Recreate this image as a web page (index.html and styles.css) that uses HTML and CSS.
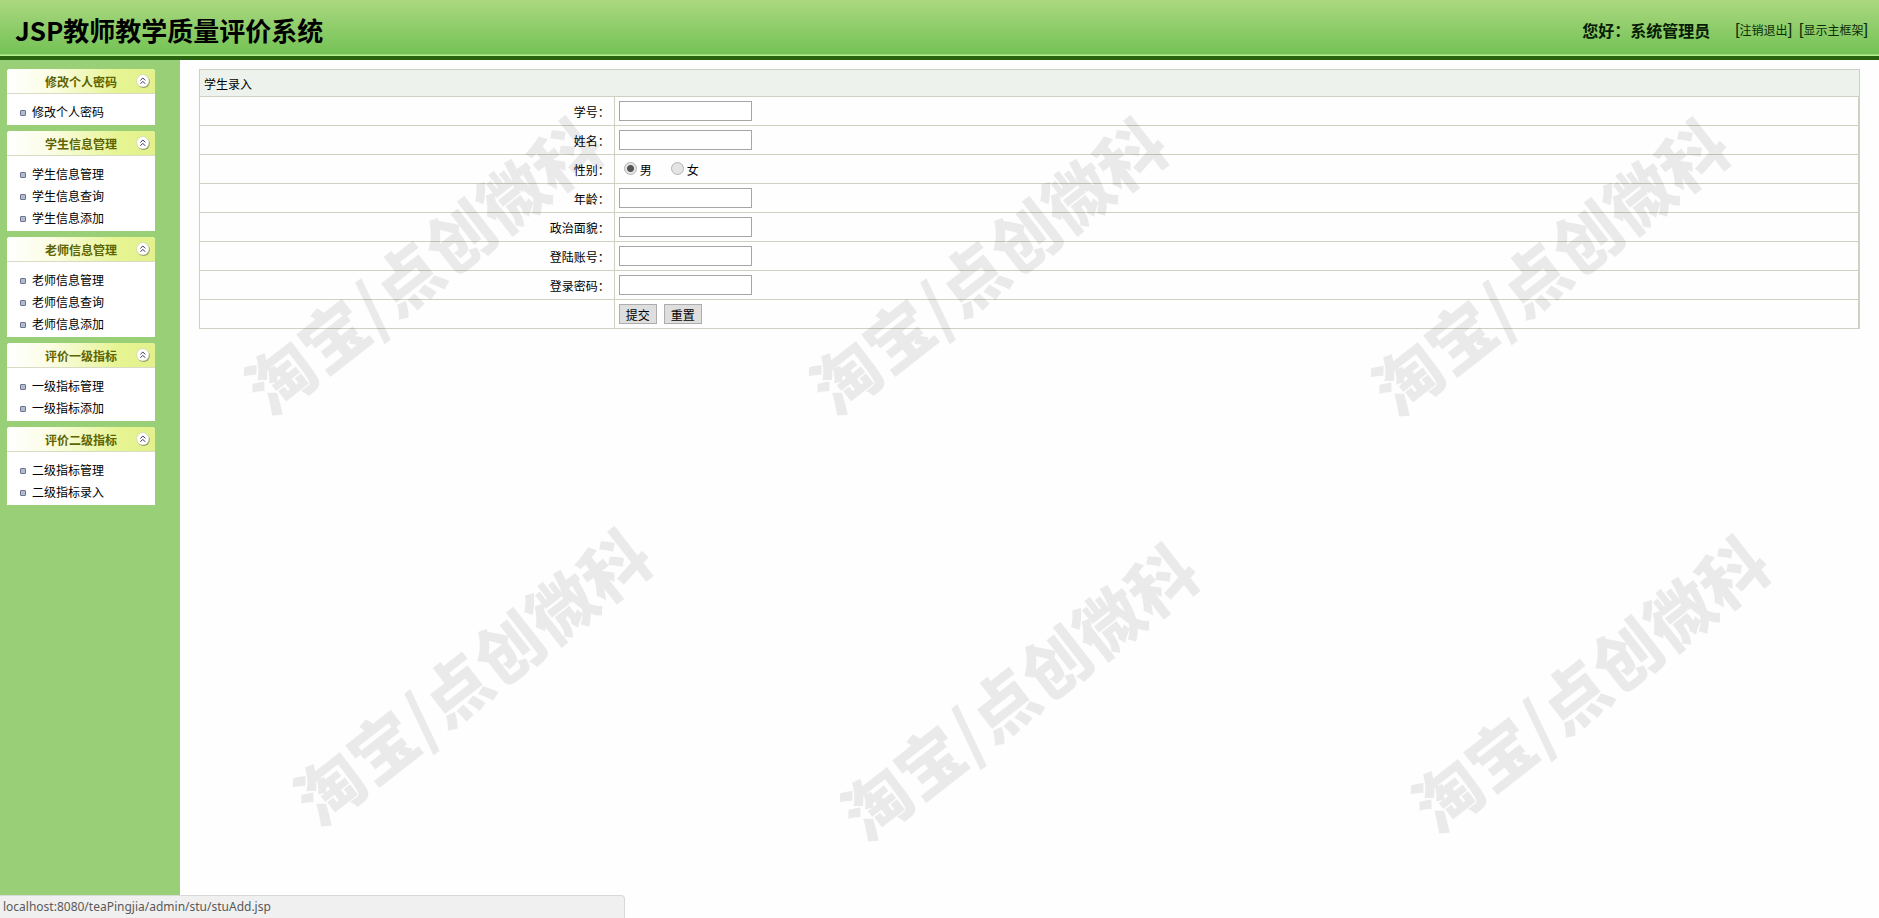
FILE: index.html
```html
<!DOCTYPE html>
<html lang="zh-CN">
<head>
<meta charset="UTF-8">
<title>JSP教师教学质量评价系统</title>
<link rel="stylesheet" href="styles.css">
</head>
<body>
  <svg class="sprite" width="0" height="0">
    <symbol id="arrow" viewBox="0 0 14 14">
      <circle cx="7.6" cy="7.8" r="6.2" fill="#8f9a6a"/>
      <circle cx="6.8" cy="6.8" r="6.2" fill="#fff" stroke="#c9cfa8" stroke-width="0.6"/>
      <path d="M4.4 6.4 L6.8 4 L9.2 6.4 M4.4 9.8 L6.8 7.4 L9.2 9.8" fill="none" stroke="#33334d" stroke-width="1"/>
    </symbol>
  </svg>

  <div class="header">
    <h1>JSP教师教学质量评价系统</h1>
    <div class="user">
      <span class="hello">您好：系统管理员</span>
      <span>[<a href="#">注销退出</a>]</span>
      <span>[<a href="#">显示主框架</a>]</span>
    </div>
  </div>

  <div class="main">
    <!-- menu -->
    <div class="sidebar">
      <div class="menu">
        <div class="menu-title"><h2>修改个人密码</h2><button type="button"><svg><use href="#arrow"/></svg></button></div>
        <ul>
          <li><a href="#">修改个人密码</a></li>
        </ul>
      </div>
      <div class="menu">
        <div class="menu-title"><h2>学生信息管理</h2><button type="button"><svg><use href="#arrow"/></svg></button></div>
        <ul>
          <li><a href="#">学生信息管理</a></li>
          <li><a href="#">学生信息查询</a></li>
          <li><a href="#">学生信息添加</a></li>
        </ul>
      </div>
      <div class="menu">
        <div class="menu-title"><h2>老师信息管理</h2><button type="button"><svg><use href="#arrow"/></svg></button></div>
        <ul>
          <li><a href="#">老师信息管理</a></li>
          <li><a href="#">老师信息查询</a></li>
          <li><a href="#">老师信息添加</a></li>
        </ul>
      </div>
      <div class="menu">
        <div class="menu-title"><h2>评价一级指标</h2><button type="button"><svg><use href="#arrow"/></svg></button></div>
        <ul>
          <li><a href="#">一级指标管理</a></li>
          <li><a href="#">一级指标添加</a></li>
        </ul>
      </div>
      <div class="menu">
        <div class="menu-title"><h2>评价二级指标</h2><button type="button"><svg><use href="#arrow"/></svg></button></div>
        <ul>
          <li><a href="#">二级指标管理</a></li>
          <li><a href="#">二级指标录入</a></li>
        </ul>
      </div>
    </div>

    <!-- student form -->
    <form class="content">
      <table>
        <tr class="caption">
          <td colspan="2">学生录入</td>
        </tr>
        <tr>
          <td class="label"><label for="xuehao">学号：</label></td>
          <td class="field"><input type="text" id="xuehao"></td>
        </tr>
        <tr>
          <td class="label"><label for="name">姓名：</label></td>
          <td class="field"><input type="text" id="name"></td>
        </tr>
        <tr>
          <td class="label">性别：</td>
          <td class="field">
            <div class="radios">
              <label><input type="radio" name="sex" checked>男</label>
              <label><input type="radio" name="sex">女</label>
            </div>
          </td>
        </tr>
        <tr>
          <td class="label"><label for="age">年龄：</label></td>
          <td class="field"><input type="text" id="age"></td>
        </tr>
        <tr>
          <td class="label"><label for="zzmm">政治面貌：</label></td>
          <td class="field"><input type="text" id="zzmm"></td>
        </tr>
        <tr>
          <td class="label"><label for="loginname">登陆账号：</label></td>
          <td class="field"><input type="text" id="loginname"></td>
        </tr>
        <tr>
          <td class="label"><label for="loginpw">登录密码：</label></td>
          <td class="field"><input type="password" id="loginpw"></td>
        </tr>
        <tr>
          <td class="label"></td>
          <td class="field">
            <div class="buttons">
              <button type="submit">提交</button>
              <button type="reset">重置</button>
            </div>
          </td>
        </tr>
      </table>
    </form>
  </div>

  <div class="watermarks">
    <span class="mark m1">淘宝/点创微科</span>
    <span class="mark m2">淘宝/点创微科</span>
    <span class="mark m3">淘宝/点创微科</span>
    <span class="mark m4">淘宝/点创微科</span>
    <span class="mark m5">淘宝/点创微科</span>
    <span class="mark m6">淘宝/点创微科</span>
  </div>

  <div class="status">localhost:8080/teaPingjia/admin/stu/stuAdd.jsp</div>
</body>
</html>
```

FILE: styles.css
```css
* {
  box-sizing: border-box;
}

body {
  margin: 0;
  min-height: 100vh;
  display: flex;
  flex-direction: column;
  font-family: "Liberation Sans", "Noto Sans CJK SC", sans-serif;
  font-size: 12px;
  color: #000;
  background: #fefefe;
}

a {
  color: inherit;
  text-decoration: none;
}

.sprite {
  position: absolute;
}

.header {
  height: 60px;
  padding: 0 11px 0 15px;
  display: flex;
  align-items: center;
  justify-content: space-between;
  background: linear-gradient(#abd880, #74c255 54px, #b4f090 55px, #b4f090 56px, #28640f 56px);
}

.header h1 {
  margin: 0;
  font-family: "Noto Sans CJK SC", sans-serif;
  font-size: 26px;
  line-height: 60px;
}

.user {
  display: flex;
  align-items: center;
  gap: 7px;
  font-size: 16px;
  color: #0c2c08;
}

.user a {
  font-size: 12px;
}

.hello {
  margin-right: 18px;
  font-weight: bold;
  color: #061c04;
}

.main {
  flex: 1;
  display: flex;
}

.sidebar {
  width: 180px;
  padding: 9px 25px 9px 7px;
  display: flex;
  flex-direction: column;
  gap: 6px;
  background: #99cf76;
}

.menu {
  background: #fff;
  border-radius: 3px 3px 0 0;
}

.menu-title {
  height: 25px;
  padding: 0 5px 0 38px;
  display: flex;
  align-items: center;
  justify-content: space-between;
  border-bottom: 1px solid #d8dcc4;
  border-radius: 3px 3px 0 0;
  background: linear-gradient(to right, #fff, #fbfde4 30%, #e6f492 75%, #e2f18c);
}

.menu-title h2 {
  margin: 0;
  font-size: 12px;
  color: #5c6404;
}

.menu-title button {
  width: 14px;
  height: 14px;
  padding: 0;
  border: none;
  background: none;
}

.menu-title svg {
  display: block;
  width: 14px;
  height: 14px;
}

.menu ul {
  margin: 0;
  padding: 8px 0 1px 13px;
  list-style: none;
}

.menu li {
  display: flex;
  align-items: center;
  gap: 6px;
  line-height: 22px;
}

.menu li::before {
  content: "";
  box-sizing: border-box;
  width: 6px;
  height: 6px;
  border: 1px solid #6c7494;
  border-radius: 1px;
  background: #b4bccc;
}

.content {
  flex: 1;
  padding: 9px 19px;
}

table {
  width: 100%;
  border: 1px solid #cdd2c0;
  border-spacing: 0;
}

td {
  height: 29px;
  padding: 0 4px;
  border-bottom: 1px solid #cdd2c0;
}

tr:last-child td {
  height: 28px;
  border-bottom: none;
}

.caption td {
  height: 27px;
  background: #edf3ec;
}

.label {
  width: 25%;
  text-align: right;
  border-right: 1px solid #cdd2c0;
}

.field {
  border-right: 1px solid #cdd2c0;
}

.field input[type="text"],
.field input[type="password"] {
  display: block;
  width: 133px;
  height: 20px;
  padding: 1px 2px;
  border: 1px solid #a6a6a6;
  background: #fff;
  font-size: 12px;
}

.radios {
  display: flex;
  gap: 14px;
}

.radios label {
  display: flex;
  align-items: center;
}

.radios input {
  appearance: none;
  width: 13px;
  height: 13px;
  margin: 0 3px 2px 5px;
  border: 1px solid #b4b4b4;
  border-radius: 50%;
  background: #e4e4e4;
}

.radios input:checked {
  background: radial-gradient(circle, #555 3px, #e4e4e4 4px);
}

.buttons {
  display: flex;
  gap: 7px;
}

.buttons button {
  width: 38px;
  height: 20px;
  padding: 0;
  border: 1px solid #adadad;
  background: #dedede;
  font-family: inherit;
  font-size: 12px;
}

.watermarks {
  position: absolute;
  inset: 0;
  overflow: hidden;
  pointer-events: none;
}

.mark {
  position: absolute;
  transform: translate(-50%, -50%) rotate(-38deg);
  font-family: "Noto Sans CJK SC", sans-serif;
  font-size: 67px;
  font-weight: 900;
  line-height: 1;
  white-space: nowrap;
  color: rgba(0, 0, 0, 0.08);
}

.m1 { left: 22.4%; top: 28.6%; }
.m2 { left: 52.5%; top: 28.6%; }
.m3 { left: 82.4%; top: 28.8%; }
.m4 { left: 25%; top: 73.4%; }
.m5 { left: 54.1%; top: 75%; }
.m6 { left: 84.5%; top: 74.2%; }

/* browser link hint */
.status {
  position: fixed;
  left: 0;
  bottom: 0;
  width: 625px;
  height: 23px;
  padding-left: 3px;
  border-top: 1px solid #d8d8d8;
  border-right: 1px solid #d8d8d8;
  border-top-right-radius: 4px;
  background: #f0f0f0;
  font-family: "Noto Sans", sans-serif;
  line-height: 22px;
  color: #5a5a5a;
}
```
